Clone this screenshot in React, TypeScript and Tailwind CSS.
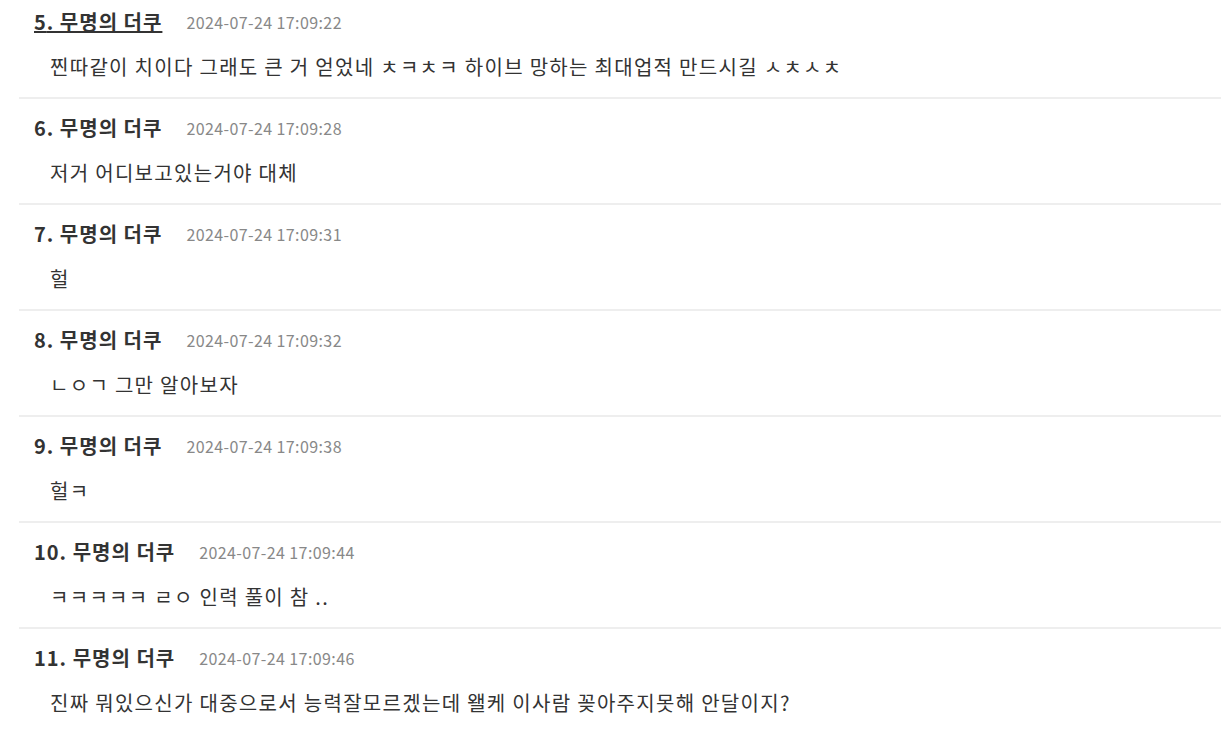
import React from 'react';

type Comment = { no: number; time: string; text: string; active?: boolean };

const comments: Comment[] = [
  { no: 5, time: '2024-07-24 17:09:22', text: '찐따같이 치이다 그래도 큰 거 얻었네 ㅊㅋㅊㅋ 하이브 망하는 최대업적 만드시길 ㅅㅊㅅㅊ', active: true },
  { no: 6, time: '2024-07-24 17:09:28', text: '저거 어디보고있는거야 대체' },
  { no: 7, time: '2024-07-24 17:09:31', text: '헐' },
  { no: 8, time: '2024-07-24 17:09:32', text: 'ㄴㅇㄱ 그만 알아보자' },
  { no: 9, time: '2024-07-24 17:09:38', text: '헐ㅋ' },
  { no: 10, time: '2024-07-24 17:09:44', text: 'ㅋㅋㅋㅋㅋ ㄹㅇ 인력 풀이 참 ..' },
  { no: 11, time: '2024-07-24 17:09:46', text: '진짜 뭐있으신가 대중으로서 능력잘모르겠는데 왤케 이사람 꽂아주지못해 안달이지?' },
];

export default function App() {
  return (
    <div
      className="h-[729px] overflow-hidden bg-white text-[#333]"
      style={{ fontFamily: '"Noto Sans CJK KR", "Noto Sans", sans-serif' }}
    >
      <ul className="-mt-[7px] ml-[19px]">
        {comments.map((c) => (
          <li key={c.no} className="border-b-2 border-[#eeeeee] pt-[14px] pb-[15px]">
            <div className="flex items-center pl-[15px] h-[30px]">
              <a
                href="#"
                className={`text-[20px] font-bold tracking-[1px] text-[#333] ${c.active ? 'underline underline-offset-[1px] decoration-[2px]' : ''}`}
              >
                {c.no}. 무명의 더쿠
              </a>
              <span className="ml-[24px] text-[16px] tracking-[0.4px] text-[#888]">{c.time}</span>
            </div>
            <p className="mt-[15px] h-[30px] leading-[30px] pl-[31px] text-[20px] tracking-[1.3px] text-[#333]">{c.text}</p>
          </li>
        ))}
      </ul>
    </div>
  );
}
